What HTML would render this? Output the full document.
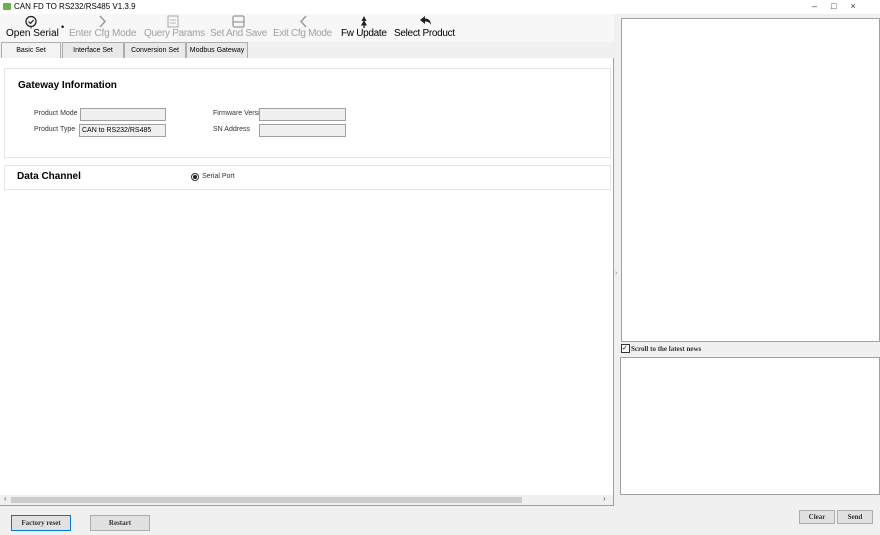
<!DOCTYPE html><html><head><style>
body{margin:0;width:880px;height:535px;background:#f0f0f0;font-family:"Liberation Sans",sans-serif;position:relative;overflow:hidden}
.a{position:absolute}
.tb{font-size:10px;color:#000;white-space:nowrap}
.dis{color:#a0a0a0}
.tab{position:absolute;top:42px;height:15px;font-size:7px;line-height:15px;text-align:center;border:1px solid #adadad;background:#e9e9e9}
.lbl{position:absolute;font-size:7px;color:#333}
.inp{position:absolute;height:11px;border:1px solid #a0a0a0;background:#f0f0f0;font-size:7px;line-height:11px;padding-left:2px}
.btn{position:absolute;border:1px solid #adadad;background:#e1e1e1;font-family:"Liberation Serif",serif;font-size:7px;text-align:center;font-weight:bold;color:#333}
</style></head><body>
<div class="a" style="left:0;top:0;width:880px;height:14px;background:#fff"></div>
<div class="a" style="left:3px;top:3px;width:8px;height:7px;background:#6ab04c;border-radius:1px"></div>
<div class="a" style="left:14px;top:2px;font-size:8px">CAN FD TO RS232/RS485 V1.3.9</div>
<div class="a" style="left:812px;top:1px;font-size:9px;color:#333;letter-spacing:14px">–□×</div>
<div class="a" style="left:0;top:14px;width:614px;height:28px;background:#f7f7f7"></div>
<svg class="a" style="left:0;top:14px" width="460" height="18">
<circle cx="31" cy="7.5" r="5" fill="none" stroke="#222" stroke-width="1.3"/><path d="M28.5 7.5l2 2 3-3.5" fill="none" stroke="#222" stroke-width="1.2"/><path d="M31 12.5v2" stroke="#222"/>
<path d="M100 2l5 5.5-5 5.5" fill="none" stroke="#999" stroke-width="1.5"/>
<rect x="168" y="2" width="10" height="11" fill="none" stroke="#aaa"/><path d="M170 6h6M170 9h6" stroke="#bbb"/>
<rect x="233" y="2" width="11" height="11" rx="1.5" fill="none" stroke="#999" stroke-width="1.3"/><path d="M233 8h11" stroke="#999" stroke-width="1.2"/>
<path d="M306 2l-5 5.5 5 5.5" fill="none" stroke="#999" stroke-width="1.5"/>
<path d="M364 2l-2.5 5h2l-2.5 4.5h6l-2.5-4.5h2z" fill="#222"/><path d="M364 11v3" stroke="#222" stroke-width="1.3"/>
<path d="M420 6l5-4v2.5c3.5 0 6 2 6 6.5-1-2.5-3-3.5-6-3.5v2.5z" fill="#222"/>
</svg>
<div class="a tb" style="left:6px;top:28px">Open Serial</div>
<div class="a" style="left:61px;top:22px;font-size:9px">•</div>
<div class="a tb dis" style="left:69px;top:28px;letter-spacing:-0.2px">Enter Cfg Mode</div>
<div class="a tb dis" style="left:144px;top:28px;letter-spacing:-0.3px">Query Params</div>
<div class="a tb dis" style="left:210px;top:28px;letter-spacing:-0.3px">Set And Save</div>
<div class="a tb dis" style="left:273px;top:28px;letter-spacing:-0.3px">Exit Cfg Mode</div>
<div class="a tb" style="left:341px;top:28px;letter-spacing:-0.3px">Fw Update</div>
<div class="a tb" style="left:394px;top:28px;letter-spacing:-0.3px">Select Product</div>
<div class="tab" style="left:1px;width:58px;background:#f3f3f3;border-bottom:none">Basic Set</div>
<div class="tab" style="left:62px;width:60px">Interface Set</div>
<div class="tab" style="left:124px;width:60px">Conversion Set</div>
<div class="tab" style="left:186px;width:60px">Modbus Gateway</div>
<div class="a" style="left:0;top:58px;width:613px;height:447px;background:#fff;border-right:1px solid #a0a0a0;border-bottom:1px solid #a0a0a0"></div>
<div class="a" style="left:4px;top:68px;width:605px;height:88px;border:1px solid #e5e5e5"></div>
<div class="a" style="left:18px;top:80px;font-size:10px;font-weight:bold">Gateway Information</div>
<div class="lbl" style="left:34px;top:110px">Product Mode</div>
<div class="inp" style="left:80px;top:108px;width:82px"></div>
<div class="lbl" style="left:34px;top:126px">Product Type</div>
<div class="inp" style="left:79px;top:124px;width:83px">CAN to RS232/RS485</div>
<div class="lbl" style="left:213px;top:110px">Firmware Versi</div>
<div class="inp" style="left:259px;top:108px;width:83px"></div>
<div class="lbl" style="left:213px;top:126px">SN Address</div>
<div class="inp" style="left:259px;top:124px;width:83px"></div>
<div class="a" style="left:4px;top:165px;width:605px;height:23px;border:1px solid #e5e5e5"></div>
<div class="a" style="left:17px;top:171px;font-size:10px;font-weight:bold">Data Channel</div>
<div class="a" style="left:191px;top:173px;width:6px;height:6px;border:1px solid #333;border-radius:50%"></div>
<div class="a" style="left:193px;top:175px;width:4px;height:4px;background:#222;border-radius:50%"></div>
<div class="lbl" style="left:202px;top:173px">Serial Port</div>
<div class="a" style="left:0;top:495px;width:613px;height:10px;background:#f0f0f0"></div>
<div class="a" style="left:11px;top:497px;width:511px;height:6px;background:#cdcdcd"></div>
<div class="a" style="left:4px;top:494px;font-size:8px;color:#555">‹</div>
<div class="a" style="left:603px;top:494px;font-size:8px;color:#555">›</div>
<div class="btn" style="left:11px;top:515px;width:58px;height:14px;line-height:14px;border-color:#0078d7">Factory reset</div>
<div class="btn" style="left:90px;top:515px;width:58px;height:14px;line-height:14px">Restart</div>
<div class="a" style="left:615px;top:270px;font-size:7px;color:#888">›</div>
<div class="a" style="left:621px;top:18px;width:257px;height:322px;background:#fff;border:1px solid #a0a0a0"></div>
<div class="a" style="left:621px;top:344px;width:7px;height:7px;border:1px solid #333;background:#fff;font-size:7px;line-height:7px">✓</div>
<div class="a" style="left:631px;top:345px;font-family:'Liberation Serif',serif;font-size:7px;font-weight:bold;color:#333">Scroll to the latest news</div>
<div class="a" style="left:620px;top:357px;width:258px;height:136px;background:#fff;border:1px solid #a0a0a0"></div>
<div class="btn" style="left:799px;top:510px;width:34px;height:12px;line-height:12px">Clear</div>
<div class="btn" style="left:837px;top:510px;width:34px;height:12px;line-height:12px">Send</div>
</body></html>
